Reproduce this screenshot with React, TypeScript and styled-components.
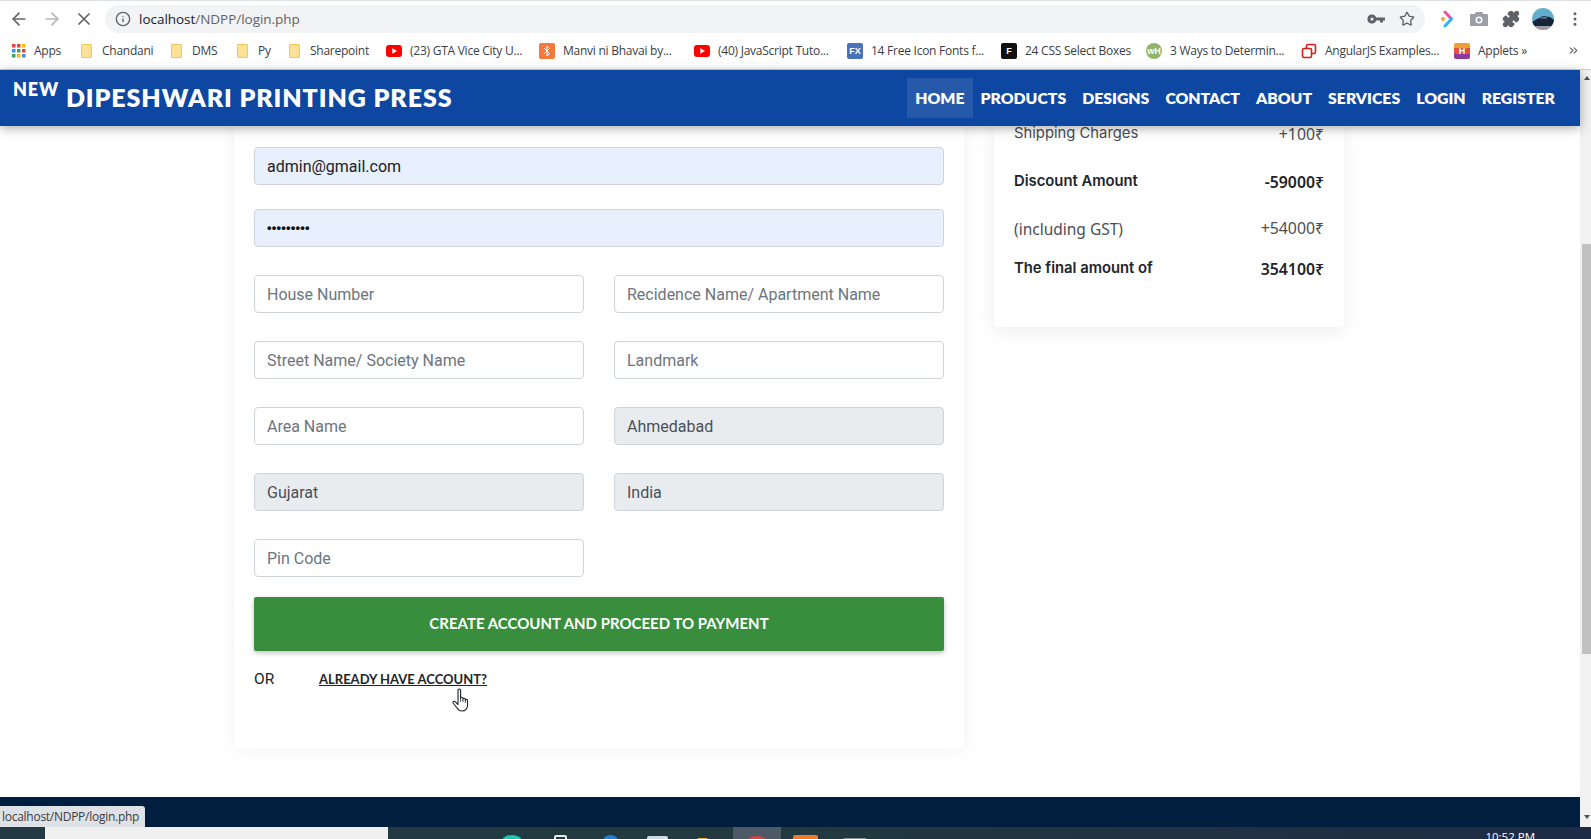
import React from 'react'
import styled, { createGlobalStyle } from 'styled-components'
import { ArrowLeft, ArrowRight, X, Info, Star, Puzzle, ChevronsRight, MoreVertical, Bluetooth } from 'lucide-react'

const GlobalStyle = createGlobalStyle`
  html, body {
    margin: 0;
    padding: 0;
    height: 100%;
    overflow: hidden;
    background: #fff;
  }
  * { box-sizing: border-box; }
`

const Screen = styled.div`
  position: relative;
  width: 1591px;
  height: 839px;
  display: flex;
  flex-direction: column;
  overflow: hidden;
  font-family: "Roboto", sans-serif;
`

const Toolbar = styled.div`
  height: 37px;
  border-top: 1px solid #dee1e6;
  background: #fff;
  display: flex;
  align-items: center;
  padding-left: 9px;
  color: #5f6368;
  flex: none;
`

const NavIcon = styled.span<{ $dim?: boolean }>`
  width: 32.500px;
  height: 24px;
  display: flex;
  align-items: center;
  color: ${p => (p.$dim ? '#b4b6b9' : '#5f6368')};
`

const Omnibox = styled.div`
  width: 1320px;
  height: 28px;
  margin-left: -1.500px;
  border-radius: 14px;
  background: #f1f3f4;
  display: flex;
  align-items: center;
  padding: 0 10px;
  font: 13.5px "Open Sans", sans-serif;
  color: #5f6368;
`

const Url = styled.span`
  margin-left: 8px;
  flex: 1;
  letter-spacing: -0.03px;
`

const Host = styled.span`
  color: #202124;
`

const OmniActions = styled.div`
  display: flex;
  gap: 14px;
  align-items: center;
`

const Extensions = styled.div`
  display: flex;
  align-items: center;
  margin-left: 6px;
  color: #5f6368;
`

const ExtSlot = styled.span`
  width: 32px;
  height: 24px;
  display: flex;
  align-items: center;
  justify-content: center;
`

const Bookmarks = styled.div`
  height: 33px;
  flex: none;
  background: #fff;
  border-bottom: 1px solid #d0d3d6;
  display: flex;
  align-items: center;
  padding: 0 0 5px 12px;
  font: 12px "Open Sans", sans-serif;
  color: #3c4043;
  white-space: nowrap;
`

const Mark = styled.span<{ $w: number }>`
  width: ${p => p.$w}px;
  flex: none;
  display: flex;
  align-items: center;
  gap: 8px;
  letter-spacing: -0.25px;
`

const Folder = styled.span`
  width: 11px;
  height: 14px;
  margin-right: 2px;
  background: #fde293;
  border: 1px solid #f0c75e;
  border-radius: 1px;
`

const Fav = styled.span<{ $bg: string; $c?: string; $round?: boolean }>`
  width: 16px;
  height: 16px;
  flex: none;
  display: flex;
  align-items: center;
  justify-content: center;
  background: ${p => p.$bg};
  color: ${p => p.$c ?? '#fff'};
  border-radius: ${p => (p.$round ? '50%' : '2px')};
  font: 700 9px "Liberation Sans", sans-serif;
  letter-spacing: 0;
`

const MoreMarks = styled.span`
  margin-left: 13px;
  display: flex;
  color: #5f6368;
`

const Viewport = styled.div`
  flex: 1;
  min-height: 0;
  display: flex;
`

const Page = styled.div`
  flex: 1;
  min-width: 0;
  display: flex;
  flex-direction: column;
  background: #fff;
`

const Scrollbar = styled.div`
  width: 11px;
  flex: none;
  background: #f1f1f1;
  display: flex;
  flex-direction: column;
  align-items: flex-end;
  padding: 6px 0 8px;
`

const ScrollThumb = styled.div`
  width: 9px;
  height: 410px;
  margin-top: 164px;
  background: #c1c1c1;
`

const ScrollArrow = styled.span<{ $down?: boolean }>`
  width: 0;
  height: 0;
  margin-right: 1px;
  border-left: 3.500px solid transparent;
  border-right: 3.500px solid transparent;
  ${p => (p.$down ? 'border-top: 4px solid #505050; margin-top: auto;' : 'border-bottom: 4px solid #505050;')}
`

const Header = styled.header`
  height: 56px;
  flex: none;
  position: relative;
  z-index: 2;
  background: #0e47a1;
  box-shadow: 0 2px 10px rgba(0, 0, 0, 0.35);
  display: flex;
  align-items: center;
  justify-content: space-between;
  padding: 0 17px 0 13px;
  color: #fff;
`

const Brand = styled.div`
  display: flex;
  padding-bottom: 2px;
  font: 800 25px "Lato", sans-serif;
  letter-spacing: 0.920px;
  white-space: nowrap;
`

const BrandNew = styled.span`
  font-size: 18px;
  letter-spacing: 0.800px;
  margin: -4px 7px 0 0;
`

const Menu = styled.nav`
  display: flex;
  height: 40px;
`

const MenuItem = styled.a<{ $active?: boolean }>`
  display: flex;
  align-items: center;
  padding: 0 8px 2px;
  font: 800 15.800px "Lato", sans-serif;
  background: ${p => (p.$active ? 'rgba(255, 255, 255, 0.1)' : 'transparent')};
`

const Content = styled.main`
  flex: 1;
  min-height: 0;
  display: flex;
  align-items: flex-start;
  gap: 30px;
  padding-left: 234px;
`

const FormCard = styled.section`
  width: 730px;
  height: 623px;
  padding: 21px 20px 0;
  background: #fff;
  border-radius: 0 0 5px 5px;
  box-shadow: 0 0 20px rgba(0, 0, 0, 0.06);
`

const SummaryCard = styled.aside`
  width: 350px;
  height: 203px;
  margin-top: -2px;
  padding: 0 20px;
  background: #fff;
  border-radius: 0 0 5px 5px;
  box-shadow: 0 5px 20px rgba(0, 0, 0, 0.07);
`

const Field = styled.div<{ $state?: 'filled' | 'disabled'; $muted?: boolean }>`
  height: 38px;
  display: flex;
  align-items: center;
  padding: 0 12px;
  border: 1px solid #ced4da;
  border-radius: 4px;
  font-size: 16px;
  color: ${p => (p.$muted ? '#6c757d' : p.$state === 'disabled' ? '#495057' : '#202124')};
  background: ${p =>
    p.$state === 'filled' ? '#e8f0fe' : p.$state === 'disabled' ? '#e9ecef' : '#fff'};
`

const WideFields = styled.div`
  display: grid;
  gap: 24px;
  margin-bottom: 28px;
`

const HalfFields = styled.div`
  display: grid;
  grid-template-columns: 330px 330px;
  column-gap: 30px;
  row-gap: 28px;
`

const Dots = styled.span`
  margin-bottom: 2px;
  font: 700 13px "Liberation Sans", sans-serif;
  letter-spacing: 0.200px;
  color: #111;
`

const SubmitButton = styled.button`
  display: block;
  width: 690px;
  height: 54px;
  margin-top: 20px;
  padding: 0 0 2px;
  border: 0;
  border-radius: 2px;
  background: #388e3c;
  color: #fff;
  font: 700 15px "Lato", sans-serif;
  box-shadow: 0 2px 5px rgba(0, 0, 0, 0.25);
`

const AltRow = styled.div`
  position: relative;
  display: flex;
  align-items: center;
  margin-top: 19px;
  color: #212529;
`

const OrLabel = styled.span`
  width: 65px;
  font-size: 15.500px;
`

const AltLink = styled.a`
  font: 700 13px "Lato", sans-serif;
  text-decoration: underline;
`

const HandCursor = styled.svg`
  position: absolute;
  left: 198px;
  top: 18px;
`

const SummaryRow = styled.div<{ $h: number; $bold?: boolean; $soft?: boolean }>`
  height: ${p => p.$h}px;
  display: flex;
  justify-content: space-between;
  align-items: flex-start;
  font-family: ${p => (p.$soft ? '"Noto Sans", sans-serif' : '"Inter", sans-serif')};
  font-size: ${p => (p.$soft ? '15.500px' : '14.800px')};
  font-weight: ${p => (p.$bold ? 600 : 400)};
  color: ${p => (p.$bold ? '#212529' : '#4a4f54')};
`

const Amount = styled.span`
  margin-top: -1px;
  font-family: "Noto Sans", sans-serif;
  font-size: 15.800px;
`

const Footer = styled.footer`
  height: 30px;
  margin-top: auto;
  flex: none;
  background: #001f3f;
`

const StatusBubble = styled.div`
  position: absolute;
  left: 0;
  bottom: 12px;
  height: 21px;
  padding: 0 6px 0 2px;
  display: flex;
  align-items: center;
  background: #dee1e6;
  border-radius: 0 3px 0 0;
  font: 12px "Open Sans", sans-serif;
  letter-spacing: -0.270px;
  color: #3c4043;
`

const Taskbar = styled.div`
  height: 12px;
  flex: none;
  position: relative;
  display: flex;
  align-items: flex-start;
  background: linear-gradient(90deg, #233a44 0%, #22393f 50%, #1f2a45 100%);
  color: #fff;
  overflow: hidden;
`

const SearchBox = styled.div`
  width: 343px;
  height: 12px;
  margin: 0 114px 0 45px;
  background: #f0f0f0;
  flex: none;
`

const TrayIcon = styled.span<{ $bg: string; $w: number; $gap?: number; $top: number; $round?: boolean; $outline?: boolean }>`
  width: ${p => p.$w}px;
  height: 12px;
  flex: none;
  margin: ${p => p.$top}px 0 0 ${p => p.$gap ?? 0}px;
  background: ${p => (p.$outline ? 'transparent' : p.$bg)};
  border: ${p => (p.$outline ? `2px solid ${p.$bg}` : '0')};
  border-radius: ${p => (p.$round ? '50% 50% 0 0' : '2px 2px 0 0')};
`

const ActiveTask = styled.span`
  width: 48px;
  height: 12px;
  margin-left: 25px;
  background: #4d5a66;
  display: flex;
  justify-content: center;
`

const Clock = styled.span`
  position: absolute;
  right: 56px;
  top: 2px;
  font: 11.500px "Open Sans", sans-serif;
`

const addressFields = (
  <HalfFields>
    <Field $muted>House Number</Field>
    <Field $muted>Recidence Name/ Apartment Name</Field>
    <Field $muted>Street Name/ Society Name</Field>
    <Field $muted>Landmark</Field>
    <Field $muted>Area Name</Field>
    <Field $state="disabled">Ahmedabad</Field>
    <Field $state="disabled">Gujarat</Field>
    <Field $state="disabled">India</Field>
    <Field $muted>Pin Code</Field>
  </HalfFields>
)

const YoutubeFav = () => (
  <svg width="16" height="16" viewBox="0 0 16 16">
    <rect x="0" y="2" width="16" height="12" rx="3" fill="#f00" />
    <path d="M6.300 5.200v5.600L11 8z" fill="#fff" />
  </svg>
)

const AppsGrid = () => {
  const colors = ['#ea4335', '#ea4335', '#fbbc05', '#4285f4', '#34a853', '#ea4335', '#34a853', '#fbbc05', '#4285f4']
  return (
    <svg width="14" height="14" viewBox="0 0 14 14">
      {colors.map((c, i) => (
        <rect key={i} x={(i % 3) * 5} y={Math.floor(i / 3) * 5} width="3.500" height="3.500" fill={c} />
      ))}
    </svg>
  )
}

export default function App() {
  return (
    <Screen>
      <GlobalStyle />
      <Toolbar>
        <NavIcon><ArrowLeft size={20} strokeWidth={2} /></NavIcon>
        <NavIcon $dim><ArrowRight size={20} strokeWidth={2} /></NavIcon>
        <NavIcon><X size={20} strokeWidth={2} /></NavIcon>
        <Omnibox>
          <Info size={16} />
          <Url><Host>localhost</Host>/NDPP/login.php</Url>
          <OmniActions>
            <svg width="18" height="12" viewBox="0 0 18 12">
              <path
                fillRule="evenodd"
                d="M5 1.500a4.500 4.500 0 0 1 4.200 3H18v3h-2v2h-3v-2H9.200A4.500 4.500 0 1 1 5 1.500zm0 3a1.500 1.500 0 1 0 0 3 1.500 1.500 0 0 0 0-3z"
                fill="#5f6368"
              />
            </svg>
            <Star size={16} />
          </OmniActions>
        </Omnibox>
        <Extensions>
          <ExtSlot>
            <svg width="14" height="18" viewBox="0 0 14 18">
              <path d="M5 2l6.500 7" fill="none" stroke="#ee4fa8" strokeWidth="3" strokeLinecap="round" />
              <path d="M11.500 9L5 16" fill="none" stroke="#29b6f6" strokeWidth="3" strokeLinecap="round" />
              <circle cx="3" cy="9" r="2" fill="#f4a23c" />
            </svg>
          </ExtSlot>
          <ExtSlot>
            <svg width="18" height="16" viewBox="0 0 18 16">
              <path d="M6 1h6l1.500 2H17a1 1 0 0 1 1 1v10a1 1 0 0 1-1 1H1a1 1 0 0 1-1-1V4a1 1 0 0 1 1-1h3.500z" fill="#9aa0a6" />
              <circle cx="9" cy="9" r="3.500" fill="#fff" />
              <circle cx="9" cy="9" r="2" fill="#9aa0a6" />
            </svg>
          </ExtSlot>
          <ExtSlot><Puzzle size={18} fill="#5f6368" /></ExtSlot>
          <ExtSlot>
            <svg width="22" height="22" viewBox="0 0 22 22">
              <defs>
                <clipPath id="avatar-clip"><circle cx="11" cy="11" r="11" /></clipPath>
              </defs>
              <g clipPath="url(#avatar-clip)">
                <rect width="22" height="22" fill="#63aecf" />
                <rect y="17" width="22" height="5" fill="#9a9d9f" />
                <path d="M0 14l5-3 6-3 7 1 4 3v6H0z" fill="#16233a" />
                <path d="M7 10.500l4-2 5 1-2 1.500z" fill="#4c6a86" />
              </g>
            </svg>
          </ExtSlot>
          <ExtSlot><MoreVertical size={18} /></ExtSlot>
        </Extensions>
      </Toolbar>
      <Bookmarks>
        <Mark $w={69}><AppsGrid />Apps</Mark>
        <Mark $w={90}><Folder />Chandani</Mark>
        <Mark $w={66}><Folder />DMS</Mark>
        <Mark $w={52}><Folder />Py</Mark>
        <Mark $w={97}><Folder />Sharepoint</Mark>
        <Mark $w={153}><YoutubeFav />(23) GTA Vice City U...</Mark>
        <Mark $w={155}><Fav $bg="#f5793a"><Bluetooth size={12} /></Fav>Manvi ni Bhavai by...</Mark>
        <Mark $w={153}><YoutubeFav />(40) JavaScript Tuto...</Mark>
        <Mark $w={154}><Fav $bg="#4a72b8">FX</Fav>14 Free Icon Fonts f...</Mark>
        <Mark $w={145}><Fav $bg="#111">F</Fav>24 CSS Select Boxes</Mark>
        <Mark $w={155}><Fav $bg="#8fb56b" $round>wH</Fav>3 Ways to Determin...</Mark>
        <Mark $w={153}>
          <svg width="16" height="16" viewBox="0 0 16 16">
            <rect x="5.500" y="1.500" width="9" height="9" rx="1.500" fill="none" stroke="#dd1b16" strokeWidth="1.600" />
            <rect x="1.500" y="5.500" width="9" height="9" rx="1.500" fill="#fff" stroke="#dd1b16" strokeWidth="1.600" />
          </svg>
          AngularJS Examples...
        </Mark>
        <Mark $w={100}>
          <Fav $bg="linear-gradient(180deg, #f0a030 0 30%, #e84e3c 30% 70%, #8e3a9d 70%)">H</Fav>
          Applets »
        </Mark>
        <MoreMarks><ChevronsRight size={13} /></MoreMarks>
      </Bookmarks>
      <Viewport>
        <Page>
          <Header>
            <Brand>
              <BrandNew>NEW</BrandNew>
              DIPESHWARI PRINTING PRESS
            </Brand>
            <Menu>
              <MenuItem $active>HOME</MenuItem>
              <MenuItem>PRODUCTS</MenuItem>
              <MenuItem>DESIGNS</MenuItem>
              <MenuItem>CONTACT</MenuItem>
              <MenuItem>ABOUT</MenuItem>
              <MenuItem>SERVICES</MenuItem>
              <MenuItem>LOGIN</MenuItem>
              <MenuItem>REGISTER</MenuItem>
            </Menu>
          </Header>
          <Content>
            <FormCard>
              <WideFields>
                <Field $state="filled">admin@gmail.com</Field>
                <Field $state="filled"><Dots>•••••••••</Dots></Field>
              </WideFields>
              {addressFields}
              <SubmitButton>CREATE ACCOUNT AND PROCEED TO PAYMENT</SubmitButton>
              <AltRow>
                <OrLabel>OR</OrLabel>
                <AltLink>ALREADY HAVE ACCOUNT?</AltLink>
                <HandCursor width="18" height="24" viewBox="0 0 18 24">
                  <path
                    d="M6 2c0-1.300 2.600-1.300 2.600 0v8c0-1 2.400-1 2.400.3v.7c0-1 2.300-1 2.300.3v.700c0-1 2.200-.800 2.200.500V17c0 3.500-2.200 6-5.500 6-2.500 0-3.800-1-5-3L1.200 15c-.700-1.300.800-2.300 2-1.300L6 16.500z"
                    fill="#fff"
                    stroke="#1c2430"
                    strokeWidth="1.100"
                    strokeLinejoin="round"
                  />
                  <path d="M8.600 10v4M11 11v3M13.300 12v3" stroke="#1c2430" strokeWidth="0.800" fill="none" />
                </HandCursor>
              </AltRow>
            </FormCard>
            <SummaryCard>
              <SummaryRow $h={48}>
                <span>Shipping Charges</span>
                <Amount>+100₹</Amount>
              </SummaryRow>
              <SummaryRow $h={46} $bold>
                <span>Discount Amount</span>
                <Amount>-59000₹</Amount>
              </SummaryRow>
              <SummaryRow $h={41} $soft>
                <span>(including GST)</span>
                <Amount>+54000₹</Amount>
              </SummaryRow>
              <SummaryRow $h={30} $bold>
                <span>The final amount of</span>
                <Amount>354100₹</Amount>
              </SummaryRow>
            </SummaryCard>
          </Content>
          <Footer />
        </Page>
        <Scrollbar>
          <ScrollArrow />
          <ScrollThumb />
          <ScrollArrow $down />
        </Scrollbar>
      </Viewport>
      <Taskbar>
        <SearchBox />
        <TrayIcon $bg="#20c2b0" $w={20} $top={8} $round />
        <TrayIcon $bg="#e8e8e8" $w={13} $gap={32} $top={8} $outline />
        <TrayIcon $bg="#1f7fd1" $w={15} $gap={36} $top={8} $round />
        <TrayIcon $bg="#cfd8e3" $w={21} $gap={29} $top={9} />
        <TrayIcon $bg="#f4b400" $w={11} $gap={29} $top={11} />
        <ActiveTask><TrayIcon $bg="#d9463a" $w={20} $top={9} $round /></ActiveTask>
        <TrayIcon $bg="#ee7b2a" $w={25} $gap={12} $top={8} />
        <TrayIcon $bg="#8a8f94" $w={24} $gap={25} $top={11} />
        <Clock>10:52 PM</Clock>
      </Taskbar>
      <StatusBubble>localhost/NDPP/login.php</StatusBubble>
    </Screen>
  )
}
